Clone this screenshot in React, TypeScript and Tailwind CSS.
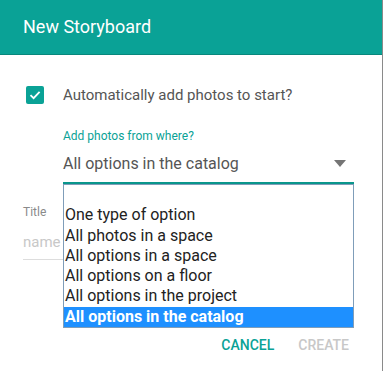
import React from "react";

const options = [
  "",
  "One type of option",
  "All photos in a space",
  "All options in a space",
  "All options on a floor",
  "All options in the project",
  "All options in the catalog",
];

export default function App() {
  return (
    <div
      className="w-[384px] h-[371px] bg-white relative overflow-hidden"
      style={{ fontFamily: "Roboto, 'Liberation Sans', sans-serif" }}
    >
      <div className="w-[383px] h-[371px] border-r border-[#8a8a8a] flex flex-col">
        <div className="h-[55px] bg-[#0aa296] border-b border-[#08877c] flex items-center pl-[23px] pb-[1px]">
          <span className="text-white text-[18px] leading-none">New Storyboard</span>
        </div>
        <div className="flex flex-col">
          <div className="flex items-center mt-[31px] pl-[26px]">
            <div className="w-[18px] h-[18px] rounded-[2px] bg-[#0aa296] flex items-center justify-center">
              <svg width="14" height="14" viewBox="0 0 14 14">
                <path d="M2.5 7.2 L5.6 10.2 L11.6 3.8" fill="none" stroke="white" strokeWidth="1.8" />
              </svg>
            </div>
            <span className="ml-[19px] text-[15px] text-[#555] leading-none">
              Automatically add photos to start?
            </span>
          </div>
          <div className="pl-[63px] mt-[26px] text-[12px] text-[#0aa296] leading-none">
            Add photos from where?
          </div>
          <div className="ml-[63px] w-[291px] mt-[6px] flex items-center justify-between border-b-2 border-[#0a968c] h-[36px] pb-[2px]">
            <span className="text-[16px] text-[#555] leading-none">All options in the catalog</span>
            <svg width="12" height="8" viewBox="0 0 12 8" className="mr-[8px]">
              <path d="M0 0 L12 0 L6 7 Z" fill="#757575" />
            </svg>
          </div>
          <div className="relative">
            <div className="pl-[23px] mt-[22px] text-[12px] text-[#8a8a8a] leading-none">Title</div>
            <div className="ml-[23px] w-[40px] mt-[17px] h-[25px] border-b border-[#ddd] text-[15px] text-[#c8c8c8] leading-none whitespace-nowrap">
              name
            </div>
            <div className="absolute left-[63px] top-0 w-[291px] h-[144px] border border-[#7f9db9] bg-white flex flex-col">
              {options.map((o, i) => (
                <div
                  key={i}
                  className={
                    "h-[20.3px] px-[1px] text-[16px] leading-[20px] whitespace-nowrap " +
                    (i === options.length - 1
                      ? "bg-[#1e90ff] text-white font-bold"
                      : "text-[#222]")
                  }
                >
                  {o}
                </div>
              ))}
            </div>
          </div>
          <div className="flex justify-end items-center mt-[78px] pr-[33px] gap-[24px] text-[14px] font-medium leading-none">
            <span className="text-[#0aa296]">CANCEL</span>
            <span className="text-[#c8c8c8]">CREATE</span>
          </div>
        </div>
      </div>
    </div>
  );
}
